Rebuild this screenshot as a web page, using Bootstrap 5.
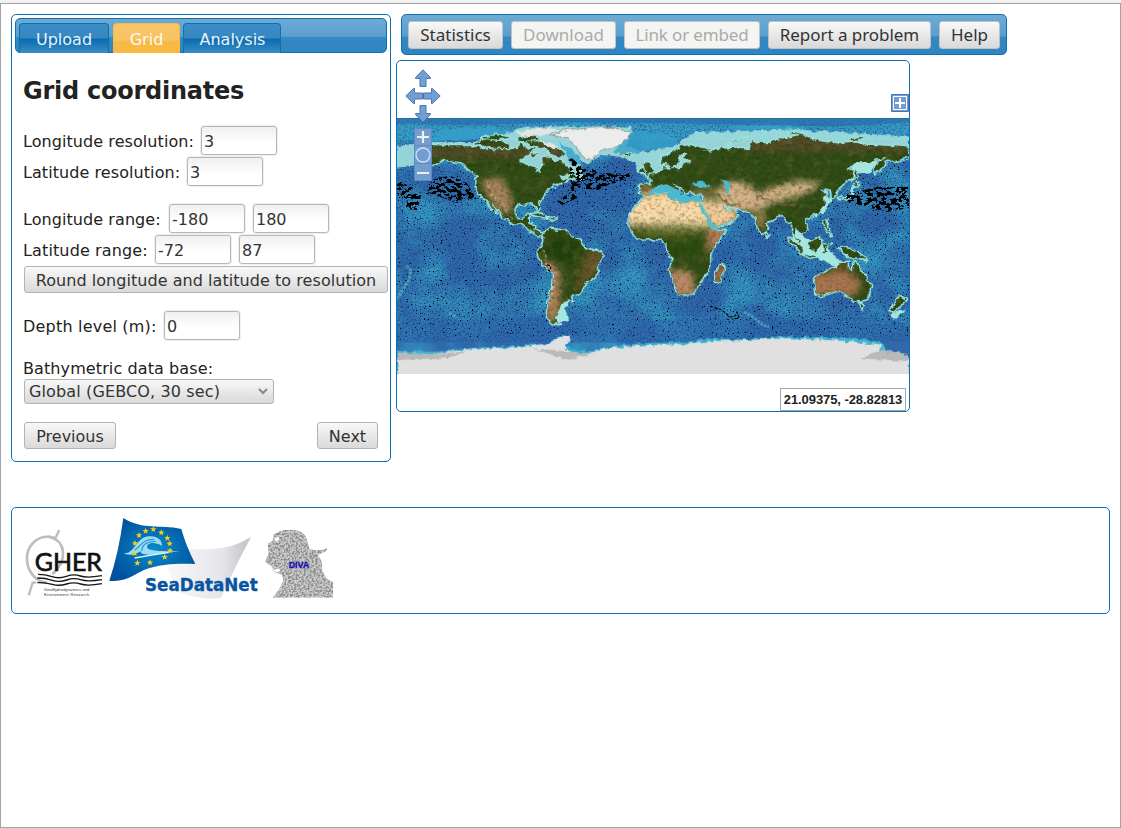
<!DOCTYPE html>
<html lang="en">
<head>
<meta charset="utf-8">
<title>Diva on web</title>
<link href="https://cdn.jsdelivr.net/npm/bootstrap@5.3.0/dist/css/bootstrap.min.css" rel="stylesheet">
<style>
body{font:16px/22px "DejaVu Sans",sans-serif;color:#222;background:#f2f2f2;height:828px;padding-top:3px;overflow:hidden}
.page-frame{height:825px;border:1px solid #a3a3a3;padding:10px 10px 0 10px;background:#fff}
.framed{border:1px solid #0e70b2;border-radius:5px;background:#fff}
.wizard{width:380px;height:448px;padding:3px}
.bar-blue{background:linear-gradient(#6cabd5 0,#5b9ecd 54%,#3688c1 56%,#2e86c2 100%);border:1px solid #0e70b2;border-radius:5px}
.wizard-tabs{height:35px;padding:4px 3px 0}
.wizard-tab{height:30px;line-height:31px;border:1px solid #0e70b2;border-bottom:0;border-radius:4px 4px 0 0;color:#e9f2fa;text-align:center;background:linear-gradient(#3b8ec7 0,#3787c0 48%,#0a6bb0 52%,#3b8cc4 100%)}
.wizard-tab.current{border-color:#f9b840;color:#fffbee;background:linear-gradient(#f9c566 0,#f8c263 56%,#f7b845 60%,#f8b944 100%)}
.wizard h1{font-size:24px;font-weight:700;line-height:30px;letter-spacing:-.25px;margin:23px 0 19px}
.form-area{padding:0 8px}
.field-row{height:31px}
.field-row span{white-space:pre;letter-spacing:.07px;padding-top:2px}
.num{width:76px;height:29px;border:1px solid #b9b7b5;border-radius:3px;box-shadow:0 0 0 1px #efefef;padding:1px 3px 0 2px;background:linear-gradient(#f0f0f0,#fff 60%);font:inherit;color:#333;outline:0}
.grey-btn{display:inline-block;border:1px solid #b4b3b2;border-radius:3px;height:27px;line-height:27px;padding:0;color:#333;background:linear-gradient(#f8f8f8,#d9d9d9);font-size:16px;white-space:nowrap;text-align:center}
.tool-bar{width:606px;height:41px;margin-left:5px;padding:6px;gap:8px}
.tool-bar .grey-btn{font:17px/25px "Noto Sans",sans-serif;height:28px;border-color:#c3c1bf}
.tool-bar .off{background:#f4f4f2;color:#aaa}
.choice{width:250px;height:25px;text-align:left;padding:0 5px 0 4px;line-height:25px;letter-spacing:.13px}
.map-box{width:514px;height:352px;margin-top:5px;overflow:hidden}
.map-box svg{display:block}
.world{margin-top:57px}
.coords{right:3px;bottom:0;width:126px;height:23px;border:1px solid #a5a5a5;background:#fff;font:bold 13px/22px "Liberation Sans",sans-serif;letter-spacing:-.08px;text-align:center}
.credits{height:107px;margin-top:45px;padding:9px 12px}
</style>
</head>
<body>
<main class="page-frame">
<div class="d-flex">
 <section class="wizard framed flex-shrink-0">
  <nav class="wizard-tabs bar-blue d-flex">
   <div class="wizard-tab" style="width:90px">Upload</div>
   <div class="wizard-tab current" style="width:67px;margin:0 3px 0 4px">Grid</div>
   <div class="wizard-tab" style="width:98px;padding-left:1px">Analysis</div>
  </nav>
  <div class="form-area">
   <h1>Grid coordinates</h1>
   <div class="field-row d-flex align-items-center"><span style="width:178px">Longitude resolution:</span><input class="num" value="3"></div>
   <div class="field-row d-flex align-items-center"><span style="width:164px">Latitude resolution:</span><input class="num" value="3"></div>
   <div class="field-row d-flex align-items-center mt-3"><span style="width:146px">Longitude range:</span><input class="num me-2" value="-180"><input class="num" value="180"></div>
   <div class="field-row d-flex align-items-center"><span style="width:132px;letter-spacing:.13px">Latitude range:</span><input class="num me-2" value="-72"><input class="num" value="87"></div>
   <div class="grey-btn d-block" style="width:364px;letter-spacing:.05px;margin:1px 0 0 1px">Round longitude and latitude to resolution</div>
   <div class="field-row d-flex align-items-center" style="margin-top:17px"><span style="width:141px;letter-spacing:.2px">Depth level (m):</span><input class="num" value="0"></div>
   <div style="margin-top:17px;height:21px;letter-spacing:.1px">Bathymetric data base:</div>
   <div class="grey-btn choice d-flex justify-content-between align-items-center" style="margin-left:1px">Global (GEBCO, 30 sec)<svg width="10" height="8" viewBox="0 0 10 8"><path d="M1 1l4 4 4-4" fill="none" stroke="#888" stroke-width="2"/></svg></div>
   <div class="d-flex justify-content-between" style="margin:18px 1px 0 1px"><div class="grey-btn" style="width:92px">Previous</div><div class="grey-btn" style="width:61px">Next</div></div>
  </div>
 </section>
 <section style="margin-left:5px">
  <div class="tool-bar bar-blue d-flex">
   <div class="grey-btn" style="width:95px">Statistics</div>
   <div class="grey-btn off" style="width:105px">Download</div>
   <div class="grey-btn off" style="width:136px;letter-spacing:-.15px">Link or embed</div>
   <div class="grey-btn" style="width:163px;letter-spacing:-.05px">Report a problem</div>
   <div class="grey-btn" style="width:61px">Help</div>
  </div>
  <div class="map-box framed position-relative">
   <svg class="world" width="512" height="256" viewBox="0 0 512 256">
    <defs>
     <filter id="sea" x="0" y="0" width="100%" height="100%" color-interpolation-filters="sRGB"><feTurbulence type="fractalNoise" baseFrequency=".02" numOctaves="7" seed="17"/><feColorMatrix values="0 0 0 0 .22  0 0 0 0 .66  0 0 0 0 .79  0 0 0 3.2 -1.25"/></filter>
     <filter id="grain" x="0" y="0" width="100%" height="100%" color-interpolation-filters="sRGB"><feTurbulence type="fractalNoise" baseFrequency=".6" numOctaves="2" seed="3"/><feColorMatrix values="0 0 0 0 .05  0 0 0 0 .2  0 0 0 0 .42  0 0 0 3 -1.4"/></filter>
     <filter id="dots" x="0" y="0" width="100%" height="100%" color-interpolation-filters="sRGB"><feTurbulence type="fractalNoise" baseFrequency=".77" seed="21"/><feColorMatrix values="0 0 0 0 0  0 0 0 0 0  0 0 0 0 0  0 0 0 24 -16.6"/></filter>
     <filter id="dense" x="0" y="0" width="100%" height="100%" color-interpolation-filters="sRGB"><feTurbulence type="fractalNoise" baseFrequency=".2 .32" numOctaves="5" seed="5"/><feColorMatrix values="0 0 0 0 0  0 0 0 0 0  0 0 0 0 0  0 0 0 30 -14.8"/></filter>
     <filter id="rough" x="-5%" y="-5%" width="110%" height="110%"><feTurbulence type="fractalNoise" baseFrequency=".25" numOctaves="2" seed="4"/><feDisplacementMap in="SourceGraphic" scale="4" xChannelSelector="R" yChannelSelector="G"/></filter>
     <filter id="soft" x="-40%" y="-40%" width="180%" height="180%"><feGaussianBlur stdDeviation="2.2"/></filter>
     <filter id="landgrain" x="0" y="0" width="100%" height="100%" color-interpolation-filters="sRGB"><feTurbulence type="fractalNoise" baseFrequency=".45" numOctaves="3" seed="12"/><feColorMatrix values="0 0 0 0 .16  0 0 0 0 .12  0 0 0 0 .02  0 0 0 3.5 -1.7"/></filter>
     <filter id="landlight" x="0" y="0" width="100%" height="100%" color-interpolation-filters="sRGB"><feTurbulence type="fractalNoise" baseFrequency=".16" numOctaves="4" seed="31"/><feColorMatrix values="0 0 0 0 .75  0 0 0 0 .62  0 0 0 0 .4  0 0 0 4 -2"/></filter>
     <path id="america" d="M-168-66L-162-69.500-156-71-141-70-128-70-115-68-108-68-95-68-94-72-88-68-82-69-86-66-94-61-94-59-88-56.500-82-55-82-52-79-51.500-79-54.500-77-57-78-62-73-62-69-59-65-60-61-56-56-52-60-50-66-50-65-48-60-46-66-44-70-43.500-70-41.500-74-40.500-76-37-76-35-81-31.500-80-27-80.500-25-82.500-28-84-30-89-30-94-29.500-97.500-27-97.500-22-95-18.500-91-18.500-90-21-87-21.500-88-16-83-15-83.500-11-80-9-77-8.500-80-7.500-85-10-88-13-94-16-97-16-105-20-106-23-112-29-114.500-31.500-112-27-110-23-112-25-115-29-117-32.500-120.500-34.500-124-40-124-47-123-49-130-54.500-135-59-142-60-148-61-152-59-158-56-163-54.700-158-58-162-59-166-61.500-164-63.500-161-64.500-166-64.500ZM-77-8L-72-12-62-10.500-57-6-51-4-50 0-44 3-37 4-35 6-39 13-39 18-41 22-48 26-49 29-53 33.500-58 35-57 38-62 39-65 42-67 46-66 48-69 51-68 54-65 55-71 54-75 50-74 44-73 37-71 30-70 19-76 14-81 6-80 2-77-2ZM-125-72L-117-75-105-73-101-69-115-69.500ZM-90-73L-80-73.500-68-68-62-66-66-63-72-65-75-69-86-71ZM-120-76L-110-78-100-76-112-75ZM-96-75L-85-78-80-75-90-74ZM-59-48L-56-51-53-47ZM-85-22L-80-23-74-20-78-20.500ZM-73-20L-68-19-72-18ZM-86-65L-81-65-83-63ZM-95-80L-88-81-86-79Z"/>
     <path id="oldworld" d="M-6-35L-10-30-17-21-17-15-13-8-8-4.500-2-5 6-4.500 9-3 9 1 14 9 12 17 15 27 18 34 26 34 32 28 35 22 40 15 40 6 42 1 51-11 44-11 40-15 37-21 33-30 32-31.500 25-31.500 19-30.500 11-34 10-37 0-36ZM-9-43L-9-37-5-36-1-37.500 3-42 8-44 12-42 16-38 18-40 13-45 19-42 23-36.500 26-40 28-37 36-36 35-32 34-29 35-28 39-21 43-13 52-16 60-22 56-26 51-24 48-30 52-27 57-27 62-25 68-24 72-20 74-13 77-8 80-13 80-16 87-21 91-22 94-17 98-16 98-10 103-1.500 104-2 100-7 100-13 105-9 109-12 106-19 110-21 116-23 121-29 120-35 122-37 118-39 121-40 125-39 126-34 129-36 128-39 133-43 140-48 141-53 136-54 142-59 153-59 157-61 164-62 156-57 156-51 163-57 163-60 171-60 179-62.500 180-69 170-70 150-71 140-73 128-72 114-74 104-78 90-75 80-72 70-73 68-68 60-69 44-68 40-66 33-67 41-67 28-71 20-70 12-65 5-61 6-58 12-57 13-55 18-59 18-62 22-66 25-65 21-62 28-60 21-57 19-54 10-54.500 8-57 8-54 4-52 -4-48.500-1-46-1-43ZM-5-50L1-51 0-54-3-58-6-58-5-54ZM-10-52L-6-52-6-55-9-54ZM-24-65L-14-65-17-63.500-22-64ZM44 25L47 25 50 15 48 13 44 17ZM80-9L81.500-7 80-6ZM95-5L105 5 104 0 98-4ZM106 6L114 8 112 9ZM109-2L117-6 118-1 115 4 110 2ZM120-1L125-1 121 1 122 5 120 5ZM120-18L122-18 122-14 125-7 121-14ZM131 1L138 2 147 7 150 10 144 8 138 8 133 4ZM130-33L136-34 140-36 141-41 140-36 136-33ZM140-43L145-44 142-42ZM142-54L144-50 143-46ZM52-71L66-76 57-73ZM95-79L105-79 98-80ZM138-75L150-76 142-74ZM173 35L178 38 175 41 169 46 167 45ZM114 22L122 18 129 15 132 12 136 12 136 15 140 18 142 11 145 15 147 19 153 27 153 31 150 37 146 39 141 38 138 35 135 34 131 31 124 33 118 35 115 34ZM145 41L148 41 147 44Z"/>
     <path id="greenland" d="M-73-78L-60-82-30-83.500-15-80-20-74-25-70-38-66-43-60-51-64-54-70-60-76Z"/>
     <clipPath id="landclip"><use href="#america"/><use href="#oldworld"/></clipPath>
    </defs>
    <rect width="512" height="256" fill="#3068ab"/>
    <rect width="512" height="256" filter="url(#sea)" opacity=".72"/>
    <rect width="512" height="22" fill="#3ba4cb" opacity=".75"/>
    <path d="M0 207L30 200 80 203 130 198 260 202 330 200 420 204 512 207V225H0Z" fill="#2f6cb0" opacity=".6"/>
    <rect y="2" width="512" height="222" filter="url(#grain)" opacity=".6"/>
    <rect y="42" width="512" height="177" filter="url(#dots)"/>
    <g transform="scale(1.42222) translate(180 90)">
     <path d="M-180-90H180V-87L130-84 70-85 30-86-60-87-130-85-180-86Z" fill="#286ba9" opacity=".65"/>
     <g filter="url(#rough)">
      <path d="M-180-70L-160-73-125-73-90-84-15-84 -18-70-5-66 15-71 30-80 100-82 180-77V-70L130-69 40-64 3-48-10-50-12-58-25-63-38-64-45-58-52-60-48-46-70-48-130-68-154-57-180-56Z" fill="#a8e4df" opacity=".85"/>
      <path d="M-150-82L-115-84-99-80-130-75-156-74ZM-15-80L10-79 20-72-5-67-20-62-28-66ZM-66-73L-55-66-48-56-58-58ZM50-82L110-82 100-84 60-85Z" fill="#35a0cb" opacity=".8"/>
      <g fill="#9ce3dd" stroke="#9ce3dd" stroke-width="2.200" stroke-linejoin="round"><use href="#america"/><use href="#oldworld"/></g>
      <path d="M100-12L108-5 120-1 133 12 142 10 130 16 113 7 103 4 97-8ZM118-39L126-33 121-24 115-21 110-18 119-26ZM-68 54L-59 52-62 44-57 37-65 40-69 50ZM138-60L158-61 153-52 141-50ZM166 48L178 44 173 50 168 52Z" fill="#a5e7df"/>
      <g fill="#304d16"><use href="#america"/><use href="#oldworld"/></g>
      <g clip-path="url(#landclip)"><g filter="url(#soft)">
       <path d="M-170-70H-60V-62H-170ZM60-79H180V-67H60Z" fill="#5c4c2e" opacity=".75"/>
       <path d="M-20-36L10-39 34-33 40-14 20-15-20-15Z" fill="#fbdcaa"/><path d="M33-34L44-32 62-28 56-13 42-11Z" fill="#f2cd9c"/>
       <path d="M42-38L55-46 65-44 75-37 82-41 105-46 119-44 108-37 85-30 69-25 55-25Z" fill="#d2b288"/>
       <path d="M70-27L79-25 79-10 72-16Z" fill="#908248"/>
       <path d="M-122-46L-107-49-99-35-100-22-111-26Z" fill="#a2835a"/>
       <path d="M-79 10L-65 16-65 42-67 53-76 53Z" fill="#a8805c"/>
       <path d="M-46 3L-35 2-35 12-44 24-56 33-50 15Z" fill="#66562a"/>
       <path d="M10 16L27 18 31 35 12 35Z" fill="#b88a67"/><path d="M37-12H54V4H38Z" fill="#ad7b53"/><path d="M43 13H51V26H43Z" fill="#ad6d4d"/>
       <path d="M110 20L136 17 147 26 142 35 111 35Z" fill="#a87450"/><path d="M126 14H140V19H126Z" fill="#7d5a32"/><path d="M-10-43H-1V-36H-10ZM28-40H45V-36H28Z" fill="#8d7341"/>
       <path d="M-16-14L35-14 35-9 10-7-15-10Z" fill="#6d7a32"/>
       <ellipse cx="20" cy="0" rx="13" ry="5" fill="#294f0f"/><ellipse cx="-64" cy="3" rx="12" ry="8" fill="#20430b"/>
      </g>
      <path d="M-117-45L-112-35-106-30-103-24-99-18M-77 3L-74 14-69 18-70 32-73 42" fill="none" stroke="#e2bf9d" stroke-width="1.600" stroke-dasharray="1.500 1.500" opacity=".7"/>
      <path d="M73-36L85-30 97-28 102-32M45-37L54-28 60-30" fill="none" stroke="#76603b" stroke-width="1.500" opacity=".75"/>
      <rect x="-180" y="-90" width="360" height="180" filter="url(#landlight)" opacity=".14"/>
      <rect x="-180" y="-90" width="360" height="180" filter="url(#landgrain)" opacity=".32"/></g>
      <use href="#greenland" fill="#ececed" stroke="#857f77" stroke-width=".5"/>
      <path d="M-96-80L-80-83-65-82-77-78-92-77ZM-80-74L-74-73-67-69-70-68Z" fill="#e4e5e3"/>
      <path d="M28-44L35-46 41-42 36-41 29-42ZM47-46L53-46 54-37 50-37 51-42ZM-5-35L2-37 10-38 11-34 20-31 34-31.500 34-36 23-35 18-38 12-42 5-43-2-37Z" fill="#4bb9d0"/>
      <path d="M33-28L42-13 44-12" fill="none" stroke="#57bdc8" stroke-width="2"/>
      <path d="M-180 72L-155 73-125 70-100 69-75 67-63 61-58 63-62 69-48 73-32 70-10 67 20 66 40 64 70 64 95 62 140 63 160 66 165 72 180 75V92H-180Z" transform="translate(0 2)" fill="#42b5cf" stroke="#42b5cf"/>
      <path d="M-180 76L-155 76-125 72-100 72-75 69-65 64-58 63-62 72-52 77-32 72-10 70 20 69 40 67 70 66 95 65 140 67 160 70 158 76 180 78V95H-180Z" fill="#e0e0e0"/>
      <path d="M-180 75L-155 76-130 74-145 79-180 81ZM-85 72L-60 74-42 76-60 80ZM160 73L180 76V81L145 79Z" fill="#b9b9b9"/>
     </g>
    </g>
    <clipPath id="dataclip"><path d="M36 60L54 58 70 65 80 82 68 80 60 85 30 74ZM172 38L182 46 205 55 236 56 234 62 213 66 201 72 178 70 180 80 165 87 160 83 174 74ZM450 76L480 69 512 69V90L490 94 465 88 450 83ZM10 78L25 74 20 92 9 91ZM0 62L16 70 12 82 0 76Z"/></clipPath>
    <g clip-path="url(#dataclip)"><rect width="512" height="110" filter="url(#dense)"/></g>
    <path d="M313 188l12 4 8 7 5-1 2-4 2 6-7 1M150 147l4 1-1 5-4-2" fill="none" stroke="#000" stroke-width="1.100" stroke-dasharray="3 1.500"/>
    <path d="M0 181l12-19 2-10-5-4M52 195l7 3M347 194l8 4 8 7 9 4" fill="none" stroke="#63ced0" stroke-width="3" stroke-dasharray="3 1" opacity=".5"/>
    <path d="M0 .5h512" stroke="#236898" opacity=".8"/>
   </svg>
   <svg class="position-absolute" style="left:8px;top:8px" width="36" height="114" viewBox="0 0 36 114">
    <g fill="#739fd0" stroke="#4975b2" stroke-width="1"><path d="M18 .8L25.500 8.500V9.500H21V17.500H15V9.500H10.500V8.500Z"/><path d="M18 53.200L25.500 45.500V44.500H21V36.500H15V44.500H10.500V45.500Z"/><path d="M.8 27L8.500 19.500H9.500V24H17.500V30H9.500V34.500H8.500Z"/><path d="M35.200 27L27.500 19.500H26.500V24H18.500V30H26.500V34.500H27.500Z"/></g>
    <path d="M9 59h18v53H9Z" fill="#719dd0"/><path d="M9.500 59.500h17v52h-17ZM9 76.500h18M9 94.500h18" stroke="#5e8ac2" fill="none"/>
    <path d="M12 68h12M18 62v12M12 104h12" stroke="#f0f0ef" stroke-width="2.200"/><circle cx="18" cy="86" r="7" fill="none" stroke="#d6e1ee" stroke-width="1.300"/>
   </svg>
   <svg class="position-absolute" style="right:0;top:33px" width="18" height="18" viewBox="0 0 18 18"><path d="M.5.5h17v17H.5Z" fill="#719dd0" stroke="#4b76b1"/><path d="M2.500 2.500h13v13h-13Z" fill="none" stroke="#fff"/><path d="M9 4v10M4 9h10" stroke="#fff" stroke-width="2"/></svg>
   <div class="coords position-absolute">21.09375, -28.82813</div>
  </div>
 </section>
</div>
<footer class="credits framed d-flex align-items-start">
 <svg width="80" height="71" viewBox="72 84 240 213" style="margin-top:11px">
  <path d="M178 90l-12 25M108 248h-10l-12 38" stroke="#bdbdbd" stroke-width="7" fill="none"/>
  <path d="M165 114C112 98 78 140 81 181C84 220 113 247 140 248M145 110C198 120 205 180 157 223" fill="none" stroke="#bdbdbd" stroke-width="8"/>
  <text x="104" y="212" font-family="Lato,sans-serif" font-size="73" fill="#111" stroke="#111" stroke-width="2" textLength="202" lengthAdjust="spacingAndGlyphs">GHER</text>
  <g fill="none" stroke="#161616" stroke-width="4"><path d="M114 223q22 0 42 7t43-1 42-1 65-1"/><path d="M112 234q24 0 45 7t43-1 42-1 64 0"/><path d="M112 248q24-1 45 5t43-1 42 0 64-1"/></g>
  <g font-family="Liberation Sans,sans-serif" font-size="12" fill="#333"><text x="132" y="272" textLength="136">GeoHydrodynamics and</text><text x="132" y="287" textLength="136">Environment Research</text></g>
 </svg>
 <svg width="149" height="83" viewBox="327 51 447 249" style="margin-left:5px">
  <defs><linearGradient id="pale"><stop stop-color="#f8f8fa"/><stop offset=".65" stop-color="#e6e6ea"/><stop offset="1" stop-color="#c0c1c5"/></linearGradient><radialGradient id="flag" cx=".52" cy=".5" r=".55"><stop stop-color="#088bc9"/><stop offset="1" stop-color="#00529e"/></radialGradient>
  <path id="star" d="M0-10L2.600-3.300 9.500-3 4 1.500 6 8 0 4.200-6 8-4 1.500-9.500-3-2.600-3.300Z" fill="#f7cd20"/></defs>
  <path d="M560 148C640 147 686 151 753 111Q701 208 663 294C620 300 585 292 540 278L500 205Z" fill="url(#pale)"/>
  <path d="M370 54C431 92 480 72 544 87Q558 138 586 192C481 187 438 204 402 226Q365 247 328 242Q356 159 370 54Z" fill="url(#flag)"/>
  <path d="M371 161C408 160 409 106 452 109C474 110 486 121 486 137C464 126 445 127 441 139C438 153 474 155 540 153C477 161 429 174 420 154C407 166 391 166 371 161Z" fill="#9ddcf5"/><path d="M404 150C419 145 424 117 462 118M425 153Q427 124 468 124" fill="none" stroke="#2f9dd2" stroke-width="4"/><path d="M404 174Q455 165 507 157" fill="none" stroke="#e5f8ff" stroke-width="4"/>
  <use href="#star" x="437" y="93"/><use href="#star" x="460" y="88"/><use href="#star" x="484" y="98"/><use href="#star" x="502" y="114"/><use href="#star" x="509" y="131"/><use href="#star" x="510" y="152"/><use href="#star" x="494" y="171"/><use href="#star" x="450" y="188"/><use href="#star" x="412" y="189"/><use href="#star" x="404" y="160"/><use href="#star" x="405" y="130"/><use href="#star" x="417" y="106"/>
  <text x="435" y="273" font-family="DejaVu Sans,sans-serif" font-weight="bold" font-size="51" fill="#0754a1" stroke="#0754a1" stroke-width="1" textLength="338" lengthAdjust="spacingAndGlyphs">SeaDataNet</text>
 </svg>
 <svg width="70" height="71" viewBox="792 84 210 213" style="margin:11px 0 0 6px">
  <defs><filter id="mesh" x="0" y="0" width="100%" height="100%" color-interpolation-filters="sRGB"><feTurbulence type="fractalNoise" baseFrequency=".17" numOctaves="2" seed="6"/><feColorMatrix values="0 0 0 0 .3  0 0 0 0 .3  0 0 0 0 .3  0 0 0 4 -1.600"/></filter><clipPath id="head"><path d="M840 93Q860 87 886 91Q914 95 921 119L928 146Q955 156 981 145L980 153L953 166Q971 184 965 207L978 234 999 247V293H817L836 270 850 242 846 224 823 216 817 202 795 185 806 162 803 133 818 122 820 105Z"/></clipPath></defs>
  <g clip-path="url(#head)"><path d="M792 84h210v213H792Z" fill="#ccc"/><path d="M792 84h210v213H792Z" filter="url(#mesh)" opacity=".5"/></g>
  <path d="M821 115l16-6 2 10-10 7ZM818 209l20-5 4 10-15 4Z" fill="#fff" stroke="#888"/>
  <text x="866" y="205" font-family="Liberation Sans,sans-serif" font-weight="bold" font-size="25" fill="#1010b0" stroke="#1010b0" stroke-width=".8" textLength="62" lengthAdjust="spacingAndGlyphs">DIVA</text>
 </svg>
</footer>
</main>
<script src="https://cdn.jsdelivr.net/npm/bootstrap@5.3.0/dist/js/bootstrap.bundle.min.js"></script>
</body>
</html>
